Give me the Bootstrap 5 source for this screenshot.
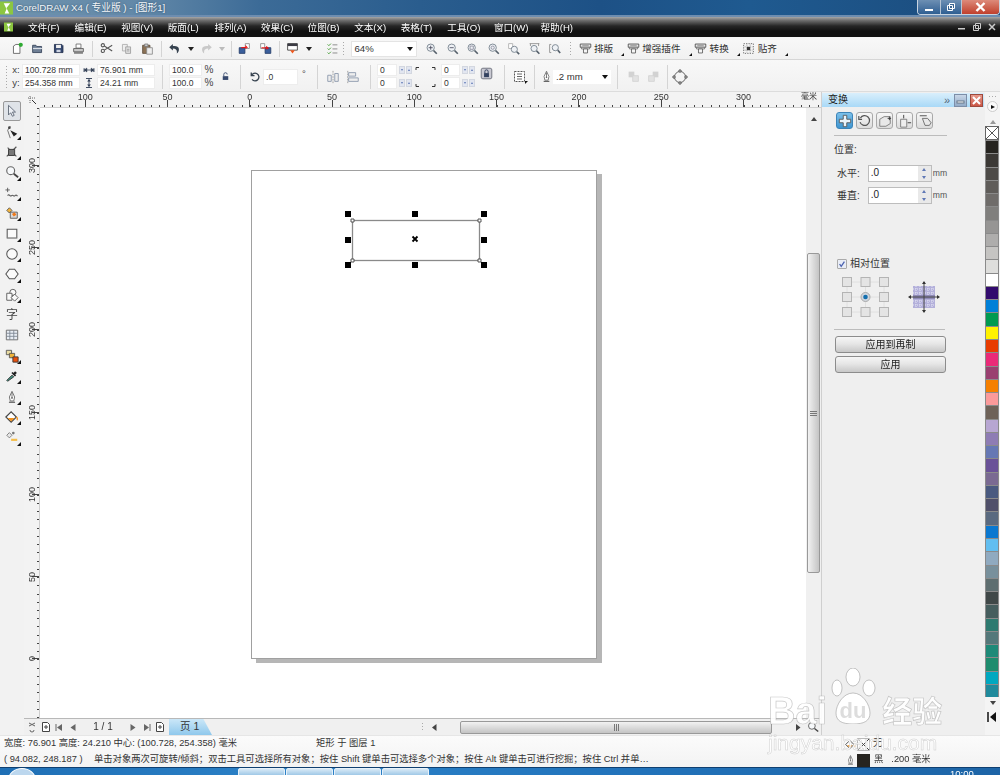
<!DOCTYPE html>
<html lang="zh">
<head>
<meta charset="utf-8">
<title>CorelDRAW X4</title>
<link href="https://cdn.jsdelivr.net/npm/bootstrap@5.3.0/dist/css/bootstrap.min.css" rel="stylesheet">
<style>
html,body{margin:0;height:775px;overflow:hidden;background:#f0f0f0}
body{font-family:"Liberation Sans","Noto Sans CJK SC",sans-serif;font-size:9.6px;line-height:1;color:#333}
.app{width:1000px;height:775px;overflow:hidden;position:relative;filter:blur(.45px)}
.ic{width:16px;height:16px;display:block;flex:none}
.titlebar{height:17px;background:linear-gradient(90deg,#6f93ad 0,#6288a8 14%,#3c6b97 26%,#2a5d8e 42%,#1d5186 60%,#1f5a90 75%,#1b4b7c 100%);border-bottom:2px solid #6d8db0;color:#fff}
.titlebar .name{font-size:9.7px;margin-left:3px;color:#f4f7fa;text-shadow:0 0 2px #2c4a64;white-space:nowrap}
.wbtns{width:83px;height:15px;border:1px solid #c9d4e0;border-top:0;border-radius:0 0 4px 4px;overflow:hidden}
.wbtns>span{display:flex;align-items:center;justify-content:center;height:100%;border-right:1px solid #b5c4d4}
.wmin{width:23px;background:linear-gradient(#6d8fb3,#2f5f92)}
.wmax{width:21px;background:linear-gradient(#6d8fb3,#2f5f92)}
.wcls{flex:1;background:linear-gradient(#dd8a7a,#c0402c);border-right:0!important}
.menubar{height:21px;background:linear-gradient(#a6a6a6 0,#6b6b6b 18%,#262626 45%,#111 70%,#111 100%);border-bottom:1px solid #f6f6f6}
.menubar .nav-link{color:#fff;padding:0;width:46.6px;text-align:center;font-size:9.6px;margin-top:1px;white-space:nowrap}
.mright{color:#ddd;gap:7px;padding-right:4px}
.tb1{height:22px;background:linear-gradient(#f8f8f8,#f1f1f1);border-bottom:1px solid #d6d6d6;padding-left:7px}
.tb2{height:32px;background:linear-gradient(#f8f8f8,#f1f1f1);border-bottom:1px solid #dcdcdc;padding:2px 0 0}
.grip{width:5px;height:16px;background:radial-gradient(circle,#aaa 0 .8px,transparent 1px) 0 0/3px 3px}
.tbn{width:20.5px;height:100%;display:flex;align-items:center;justify-content:center;flex:none}
.tb1 .tbn .ic{width:13px;height:13px}
.tar{width:11px;display:flex;justify-content:center;flex:none}
.tar::before{content:"";border:3px solid transparent;border-top:4px solid #222;border-bottom:0}
.tar.off::before{border-top-color:#bbb}
.vsep{width:7px;height:16px;flex:none;background:linear-gradient(#d4d4d4,#d4d4d4) center/1px 100% no-repeat}
.vsep.lg{height:24px}
.combo{background:#fff;border:1px solid #e4e4e4;height:16px;display:flex;align-items:center;justify-content:space-between;padding:0 3px;flex:none}
.combo::after{content:"";border:3.5px solid transparent;border-top:4px solid #111;border-bottom:0}
.bigbtn{display:flex;align-items:center;flex:none;height:100%}
.bigbtn .tri{width:11px;height:100%;display:flex;align-items:flex-end;justify-content:flex-end;padding:0 0 3px 0}
.bigbtn .tri::before{content:"";border-style:solid;border-width:0 0 3px 3px;border-color:transparent transparent #111 transparent}
.fld{height:12px;background:#fff;border:1px solid #ededed;border-radius:0;padding:0 2px;font-size:8.6px;line-height:10px;color:#333;display:flex;align-items:center;min-height:0;white-space:nowrap}
.st{display:flex;flex-direction:column;gap:1px;flex:none}
.lbl{display:flex;align-items:center;justify-content:center;height:12px;color:#444}
.spin{display:flex;gap:1px;height:12px;align-items:center;padding-left:2px}
.spin i{width:6px;height:8px;background:#e2e6f0;border:1px solid #d3d7e0;display:flex;align-items:center;justify-content:center}
.spin i::before{content:"";border:1.500px solid transparent;border-top:2px solid #5f78b5;border-bottom:0}
.spin i+i::before{border-top:0;border-bottom:2px solid #5f78b5}
.main{height:643px}
.toolbox{width:24px;background:#f2f2f2;flex:none;padding-top:9px}
.tool{height:20.4px;width:24px;display:flex;align-items:center;justify-content:center;position:relative}
.tool .ic{width:14px;height:14px}
.tool.more::after{content:"";position:absolute;right:3px;bottom:2px;border-style:solid;border-width:0 0 4px 4px;border-color:transparent transparent #111 transparent}
.tool.on{width:18px;margin-left:3px;border:1px solid #999;border-radius:2px;background:#dfe3e8}
.rulerrow{height:16px;background:#f3f3f3}
.corner{width:16px;flex:none;display:flex;align-items:center;justify-content:center}
.hruler{background:repeating-linear-gradient(90deg,#444 0 1px,transparent 1px 8.23px) 4px 100%/100% 2px no-repeat;padding-left:4px;overflow:hidden;border-bottom:1px solid #cfcfcf}
.hcell{width:82.3px;flex:none;text-align:center;padding-top:1px;font-size:9px;background:linear-gradient(#444,#444) center bottom/1px 7px no-repeat}
.vruler{width:16px;flex:none;background:#f3f3f3 repeating-linear-gradient(180deg,#444 0 1px,transparent 1px 8.23px) 100% 0/2px 100% no-repeat;padding-top:16px;overflow:hidden;border-right:1px solid #cfcfcf}
.vcell{height:82.3px;display:flex;align-items:center;padding-left:4px;background:linear-gradient(#444,#444) right center/7px 1px no-repeat}
.vcell span{writing-mode:vertical-rl;transform:rotate(180deg);font-size:9px}
.canvas{position:relative;background:#fff;min-width:0}
.sheet{position:absolute;left:211px;top:62px;width:346px;height:489px;background:#fff;border:1px solid #a0a0a0;box-shadow:5px 4px 0 #b6b6b6}
.vscroll{width:15px;flex:none;background:#f0f0f0;padding-top:9px}
.arrow-up{width:0;height:0;border:3px solid transparent;border-bottom:4px solid #444;border-top:0;margin:0 auto}
.vthumb{margin:132px 1px 0 1px;height:320px;background:linear-gradient(90deg,#f2f2f2,#ddd 45%,#c4c4c4);border:1px solid #999;border-radius:2px;display:flex;align-items:center;justify-content:center}
.vthumb::before{content:"";width:7px;height:5px;background:repeating-linear-gradient(#777 0 1px,transparent 1px 2px)}
.botrow{height:17px;background:#f0f0f0;border-top:1px solid #b8b8b8}
.pgctl{width:129px;flex:none;display:flex;align-items:center}
.pgctl svg{flex:none}
.pgno{width:46px;text-align:center;font-size:10px;flex:none}
.pgtab{width:43px;height:16px;background:linear-gradient(#cbe7f8,#8fc8ec);clip-path:polygon(0 0,80% 0,100% 100%,0 100%);font-size:10.5px;padding:2px 0 0 11px;flex:none}
.hthumb{width:312px;height:13px;margin-left:18px;flex:none;background:linear-gradient(#f2f2f2,#ddd 45%,#c4c4c4);border:1px solid #999;border-radius:2px;display:flex;align-items:center;justify-content:center}
.hthumb::before{content:"";width:5px;height:7px;background:repeating-linear-gradient(90deg,#777 0 1px,transparent 1px 2px)}
.docker{width:164px;flex:none;background:#efefef;border-left:1px solid #cfcfcf;padding-top:1px}
.dhead{height:14px;background:linear-gradient(#d9effc,#a9d9f7);padding-left:6px;margin-right:1px;font-size:10px;color:#222}
.dbtn{width:13px;height:13px;border:1px solid #7d8ea8;display:flex;align-items:center;justify-content:center;margin-right:3px;background:linear-gradient(#c9d7e8,#93abc8)}
.dbtn.x{background:linear-gradient(#e79a8c,#cb5646);border-color:#9c4a3e;color:#fff;margin-right:1px}
.dtab{width:17px;height:17px;border:1px solid #a9a9a9;border-radius:3px;background:linear-gradient(#f7f7f7,#dcdcdc);display:flex;align-items:center;justify-content:center;margin-right:3px}
.dtab.on{background:linear-gradient(#7bc0ea,#3f95d0);border-color:#3c84b8}
.dhr{height:1px;background:#bcbcbc;margin-left:12px;margin-right:38px;opacity:1;border:0}
.dl{padding-left:12px;color:#333;font-size:10px}
.drow{padding-left:15px;height:17px;display:flex;align-items:center;font-size:10px}
.dinp{width:64px;height:17px;background:#fff;border:1px solid #bdbdbd;border-radius:0;padding:0 2px;margin-left:8px;display:flex;justify-content:space-between;align-items:flex-start;font-size:10px;line-height:13px;min-height:0;flex:none}
.dsp{width:13px;height:15px;flex:none;display:flex;flex-direction:column;justify-content:space-around;align-items:center;background:#e9e9e9;margin-right:-2px}
.dsp i{display:block;border:2.5px solid transparent;border-bottom:3px solid #5f78b5;border-top:0}
.dsp i+i{border-bottom:0;border-top:3px solid #5f78b5}
.mm{margin-left:1px;font-size:8.6px;color:#555}
.dchk{padding-left:15px;height:11px;display:flex;align-items:center;gap:3px;font-size:10px;margin-top:53px}
.dchk .form-check-input{width:10px;height:10px;margin:0;border-radius:1px;border-color:#aaa;background-color:#e9edf6;flex:none;background-image:url("data:image/svg+xml,%3csvg xmlns='http://www.w3.org/2000/svg' viewBox='0 0 10 10'%3e%3cpath d='M2 5l2 3 4-6' fill='none' stroke='%234a62b0' stroke-width='1.600'/%3e%3c/svg%3e");background-size:100% 100%}
.dbt{display:block;width:111px;height:17px;margin-left:13px;padding:0;border:1px solid #8c8c8c;border-radius:3px;background:linear-gradient(#f6f6f6,#e6e6e6 45%,#c8c8c8);font-size:10px;color:#222;line-height:14px}
.palette{width:15px;flex:none;background:#f4f4f4;padding-top:3px}
.sw{height:13.27px;width:14px;border:1px solid #8a8a8a;border-width:1px 1px 0 1px}
.pdots{width:9px;height:3px;margin:0 auto;background:radial-gradient(circle,#aaa 0 .7px,transparent 1px) 0 0/3px 3px}
.pcirc{width:11px;height:11px;border-radius:50%;margin:3px auto 0;border:1px solid #ccc;background:#fafafa;display:flex;align-items:center;justify-content:center}
.pcirc::before{content:"";border:2.5px solid transparent;border-left:4px solid #111;border-right:0}
.status{height:32px;background:linear-gradient(#fbfbfb,#f3f3f3);border-top:1px solid #e6e6e6;font-size:9.3px;color:#333;padding-left:4px}
.sl{height:16px;display:flex;align-items:center;white-space:nowrap}
.sright{width:155px;flex:none}
.taskbar{height:8px;background:linear-gradient(90deg,#1f6fb5,#2c82c8 30%,#2274bc 60%,#1d64a6);border-top:1px solid #0f3f70;overflow:hidden;color:#fff}
.orb{width:28px;height:24px;border-radius:50%;margin:0 0 0 8px;background:#bcd7ee;border:1px solid #fff;flex:none}
.tk{width:47px;height:10px;background:linear-gradient(#d8e9f6,#8dbde2);border:1px solid #e8f2fa;border-radius:2px 2px 0 0;flex:none;margin-right:1px}
.clock{font-size:9.5px;width:50px;flex:none;line-height:1;padding-top:1px}
.wm{position:absolute;left:768px;top:668px;width:180px;color:#fff;pointer-events:none;z-index:5}
.wm .logo{font:700 38px/1 "Liberation Sans",sans-serif;-webkit-text-stroke:.7px rgba(150,150,150,.55);opacity:.92;margin-bottom:-6px}
.wm .jy{font:700 30px/1 "Noto Sans CJK SC",sans-serif;-webkit-text-stroke:.7px rgba(150,150,150,.55);margin-left:3px;opacity:.92}
.wm .paw{width:52px;height:56px;flex:none;display:block}
.wm .url{font:400 21px/1 "Liberation Sans",sans-serif;-webkit-text-stroke:.5px rgba(150,150,150,.5);margin-top:8px;opacity:.9;white-space:nowrap}
</style>
</head>
<body>
<svg width="0" height="0" class="d-block" style="height:0">
<defs>
<symbol id="new" viewBox="0 0 16 16"><path d="M3 5l3-2h5v11H3z" fill="#fff" stroke="#555"/><circle cx="12" cy="3.5" r="2.6" fill="#2faa33"/></symbol>
<symbol id="open" viewBox="0 0 16 16"><path d="M2 4h4l1 1.5h6V13H2z" fill="#6f7f95" stroke="#2d3b52"/><path d="M2.5 8h11" stroke="#d9dee6" stroke-width="1.5"/></symbol>
<symbol id="save" viewBox="0 0 16 16"><path d="M3 3h9l1.5 1.5V13H3z" fill="#34476f" stroke="#1d2a47"/><path fill="#f0f0f0" d="M5 3.5h6v4H5z"/><path fill="#cfd6e4" d="M5.5 9.5h5v3h-5z"/></symbol>
<symbol id="print" viewBox="0 0 16 16"><path d="M5 2.500h6v5H5z" fill="#fff" stroke="#666"/><path d="M2 8h12v4H2z" fill="#c8c8c8" stroke="#555"/><path d="M2.500 13.500h11" stroke="#555" stroke-width="1.500"/></symbol>
<symbol id="cut" viewBox="0 0 16 16"><g fill="none" stroke="#555" stroke-width="1.300"><circle cx="3.500" cy="4" r="2"/><circle cx="3.500" cy="11" r="2"/><path d="M5.300 5L15 11M5.300 10L15 4"/></g></symbol>
<symbol id="copy" viewBox="0 0 16 16"><path d="M3 3h6v8H3z" fill="#eee" stroke="#aaa"/><path d="M7 6h6v8H7z" fill="#e2e2e2" stroke="#999"/><path d="M8.500 9h3M8.500 11h3" stroke="#999"/></symbol>
<symbol id="paste" viewBox="0 0 16 16"><path d="M2 4h9v10H2z" fill="#8b7256" stroke="#5c4c3a"/><path d="M4.500 2.500h4v3h-4z" fill="#ccc" stroke="#777"/><path d="M7 7h7v8H7z" fill="#eee" stroke="#888"/></symbol>
<symbol id="undo" viewBox="0 0 16 16"><path d="M6 2.500L1.500 6.500 6 10.500V8c3.500 0 5 1.500 5 4.500 0 .8-.1 1.200-.3 1.700 2-1.500 3-3.500 2.700-6C13 5.500 10 4.500 6 5z" fill="#36424f"/></symbol>
<symbol id="redo" viewBox="0 0 16 16"><path d="M10 2.500L14.500 6.500 10 10.500V8c-3.500 0-5 1.500-5 4.500 0 .8.1 1.200.3 1.700-2-1.500-3-3.500-2.700-6C3 5.500 6 4.500 10 5z" fill="#c9c9c9"/></symbol>
<symbol id="imp" viewBox="0 0 16 16"><path d="M1.500 7h7v7h-7z" fill="#3a5f9c" stroke="#223a66"/><path d="M9 2h5v6H9z" fill="#fff" stroke="#888"/><path d="M4 7l7-.5-2-2M11 6.500l-2 1.500" stroke="#e11" stroke-width="1.300" fill="none"/></symbol>
<symbol id="exp" viewBox="0 0 16 16"><path d="M7.500 7h7v7h-7z" fill="#3a5f9c" stroke="#223a66"/><path d="M2 2h5v6H2z" fill="#fff" stroke="#888"/><path d="M3 7l8 .5-2-2M11 7.500l-2 1.500" stroke="#e11" stroke-width="1.300" fill="none"/></symbol>
<symbol id="pub" viewBox="0 0 16 16"><path d="M2 2h12v8H2z" fill="#fff" stroke="#333"/><path d="M2 2h12v3H2z" fill="#3b3b44"/><path d="M5 10h6l-3 4z" fill="#f1591e"/></symbol>
<symbol id="chk" viewBox="0 0 16 16"><path d="M2 3l1.500 1.500L6 2M2 8l1.500 1.500L6 7M2 13l1.500 1.500L6 12" fill="none" stroke="#4b9f3b" stroke-width="1.200"/><path d="M8 3.500h6M8 8.500h6M8 13.500h6" stroke="#777"/></symbol>
<symbol id="zp" viewBox="0 0 16 16"><circle cx="7" cy="7" r="4.500" fill="#eef1f5" stroke="#7f8b95" stroke-width="1.200"/><path d="M10.500 10.500l4 4" stroke="#55606b" stroke-width="2"/><path d="M4.500 7h5M7 4.500v5" stroke="#445"/></symbol>
<symbol id="zm" viewBox="0 0 16 16"><circle cx="7" cy="7" r="4.500" fill="#eef1f5" stroke="#7f8b95" stroke-width="1.200"/><path d="M10.500 10.500l4 4" stroke="#55606b" stroke-width="2"/><path d="M4.500 7h5" stroke="#445"/></symbol>
<symbol id="zs" viewBox="0 0 16 16"><circle cx="7" cy="7" r="4.500" fill="#eef1f5" stroke="#7f8b95" stroke-width="1.200"/><path d="M10.500 10.500l4 4" stroke="#55606b" stroke-width="2"/><path d="M5 5h4v4H5z" fill="none" stroke="#889"/></symbol>
<symbol id="za" viewBox="0 0 16 16"><circle cx="7" cy="7" r="4.500" fill="#eef1f5" stroke="#7f8b95" stroke-width="1.200"/><path d="M10.500 10.500l4 4" stroke="#55606b" stroke-width="2"/><circle cx="7" cy="7" r="2" fill="none" stroke="#889"/></symbol>
<symbol id="zd" viewBox="0 0 16 16"><path d="M2 2h5v6H2z" fill="#fff" stroke="#aaa"/><circle cx="9" cy="9" r="3.800" fill="#eef1f5" stroke="#7f8b95" stroke-width="1.200"/><path d="M12 12l3 3" stroke="#55606b" stroke-width="2"/></symbol>
<symbol id="zw" viewBox="0 0 16 16"><path d="M2 2h12M3 2v3M13 2v3" stroke="#888" fill="none"/><circle cx="7.500" cy="8" r="3.800" fill="#eef1f5" stroke="#7f8b95" stroke-width="1.200"/><path d="M10.500 11l3.500 3.500" stroke="#55606b" stroke-width="2"/></symbol>
<symbol id="zh" viewBox="0 0 16 16"><path d="M2 3v10M2 3h2M2 13h2" stroke="#888" fill="none"/><circle cx="9" cy="7" r="3.800" fill="#eef1f5" stroke="#7f8b95" stroke-width="1.200"/><path d="M12 10l3 3.500" stroke="#55606b" stroke-width="2"/></symbol>
<symbol id="cmd" viewBox="0 0 16 16"><path d="M1.500 2.500h13v4h-13z" fill="#e8e8e8" stroke="#444"/><path d="M3 6.500h10v2H3z" fill="#fff" stroke="#666"/><path d="M5.500 8.500h5v5h-5z" fill="#f5f5f5" stroke="#555"/><path d="M4 4.500h8" stroke="#888"/></symbol>
<symbol id="snap" viewBox="0 0 16 16"><path d="M2 2h12v12H2z" fill="none" stroke="#555" stroke-dasharray="1.500 1.500"/><path d="M6 2v12M10 2v12M2 6h12M2 10h12" stroke="#999" stroke-dasharray="1 1"/><path d="M6 6h4v4H6z" fill="#333"/></symbol>
<symbol id="w" viewBox="0 0 16 16"><path d="M1.500 5.500v5M14.500 5.500v5" stroke="#2d3b52" stroke-width="1.400"/><path d="M2 8h12M2 8l3-2.500v5zM14 8l-3-2.500v5z" stroke="#2d3b52" fill="#2d3b52"/></symbol>
<symbol id="h" viewBox="0 0 16 16"><path d="M4 2h8M4 14h8M8 3v10" stroke="#2d3b52" stroke-width="1.200" fill="none"/><path d="M8 3L5.500 6h5zM8 13l-2.500-3h5z" fill="#2d3b52"/></symbol>
<symbol id="lk" viewBox="0 0 16 16"><path d="M4 7.500h8V13H4z" fill="#37496e"/><path d="M5.500 7.500V5a2.500 2.500 0 015 0" fill="none" stroke="#37496e" stroke-width="1.300"/></symbol>
<symbol id="rot" viewBox="0 0 16 16"><path d="M4 3v4h4M4.300 7a4.700 4.700 0 11.700 4.500" fill="none" stroke="#36424f" stroke-width="1.600"/></symbol>
<symbol id="al1" viewBox="0 0 16 16"><path d="M8 1v14" stroke="#999" stroke-dasharray="2 1"/><path d="M2 6h4v7H2zM10 4h4v9h-4z" fill="#eee" stroke="#8a97ab"/></symbol>
<symbol id="al2" viewBox="0 0 16 16"><path d="M2 1v14" stroke="#999" stroke-dasharray="2 1"/><path d="M3 3h8v4H3zM3 9h11v4H3z" fill="#eee" stroke="#8a97ab"/></symbol>
<symbol id="clk" viewBox="0 0 16 16"><rect x="1.500" y="1.500" width="13" height="13" rx="2" fill="#c9c9d2" stroke="#5f6270"/><path d="M5 7.500h6v5H5z" fill="#33415f"/><path d="M6 7.500V5.500a2 2 0 014 0v2" fill="none" stroke="#33415f" stroke-width="1.200"/></symbol>
<symbol id="wrap" viewBox="0 0 16 16"><path d="M2.500 2.500h10v10h-10z" fill="#fff" stroke="#555" stroke-dasharray="2 1"/><path d="M5 5h5M5 7.500h5M5 10h5" stroke="#666"/><path d="M13 12l3 0-3 3z" fill="#111"/></symbol>
<symbol id="pen" viewBox="0 0 16 16"><path d="M8 1.500L5 8l1 4.500h4L11 8z" fill="#fff" stroke="#666"/><path d="M8 3v6" stroke="#666"/><circle cx="8" cy="9" r="1" fill="#666"/><path d="M4.500 14h7" stroke="#666" stroke-width="1.500"/></symbol>
<symbol id="ob1" viewBox="0 0 16 16"><path d="M2 2h7v7H2z" fill="#d2d2d2"/><path d="M7 7h7v7H7z" fill="#e2e2e2" stroke="#d2d2d2"/></symbol>
<symbol id="ob2" viewBox="0 0 16 16"><path d="M7 2h7v7H7z" fill="#d2d2d2"/><path d="M2 7h7v7H2z" fill="#e2e2e2" stroke="#d2d2d2"/></symbol>
<symbol id="conv" viewBox="0 0 16 16"><circle cx="8" cy="8" r="5.500" fill="none" stroke="#666"/><path d="M7 1h2v2H7zM7 13h2v2H7zM1 7h2v2H1zM13 7h2v2h-2z" fill="#fff" stroke="#555"/></symbol>
<symbol id="t1" viewBox="0 0 16 16"><path d="M4 1.500v11l2.500-2.500 2 4 2-1-2-3.800h3.500z" fill="#eceff4" stroke="#5a6472"/></symbol>
<symbol id="t2" viewBox="0 0 16 16"><path d="M6 1.500L3 6l3 9" fill="none" stroke="#666"/><circle cx="5" cy="3" r="1.500" fill="#444"/><path d="M6 6l8 4-4 3z" fill="#222"/></symbol>
<symbol id="t3" viewBox="0 0 16 16"><path d="M3 3l10 10M13 2L2 13" stroke="#555" stroke-width="1.300"/><path d="M4 5h7v7H4z" fill="#777" stroke="#333"/></symbol>
<symbol id="t4" viewBox="0 0 16 16"><circle cx="6.500" cy="6.500" r="4.500" fill="#f7f9fb" stroke="#666" stroke-width="1.300"/><path d="M10 10l5 4" stroke="#444" stroke-width="2"/></symbol>
<symbol id="t5" viewBox="0 0 16 16"><path d="M3 2v5M.5 4.500h5" stroke="#555"/><path d="M3 11c2-3 2.500 2 4.500 0s2 2 4 0 1.500 1 3 0" stroke="#555" fill="none" stroke-width="1.200"/></symbol>
<symbol id="t6" viewBox="0 0 16 16"><path d="M2 5l3-3 3 3-3 3z" fill="#f3b43d" stroke="#555"/><path d="M6 7h8v7H6z" fill="#d9d9d9" stroke="#555"/><path d="M8 9l3-2 2 3-3 2z" fill="#ee7a1c"/></symbol>
<symbol id="t7" viewBox="0 0 16 16"><path d="M2.500 2.500h11v10h-11z" fill="#fafafa" stroke="#555" stroke-width="1.200"/><path d="M3 11.500h10v1H3z" fill="#aaa"/></symbol>
<symbol id="t8" viewBox="0 0 16 16"><circle cx="8" cy="8" r="6" fill="#fafafa" stroke="#555" stroke-width="1.200"/></symbol>
<symbol id="t9" viewBox="0 0 16 16"><path d="M5 2.500h6L15 8l-4 5.500H5L1 8z" fill="#fafafa" stroke="#555" stroke-width="1.200"/></symbol>
<symbol id="t10" viewBox="0 0 16 16"><circle cx="9" cy="5" r="3.500" fill="#fafafa" stroke="#555"/><path d="M2 6h6v8H2z" fill="#fafafa" stroke="#555"/><path d="M11 7l4 4-4 4-4-4z" fill="#fafafa" stroke="#555"/></symbol>
<symbol id="t12" viewBox="0 0 16 16"><path d="M1.500 2.500h13v11h-13z" fill="#e8edf4" stroke="#666"/><path d="M1.500 6h13M1.500 9.500h13M5.500 2.500v11M10 2.500v11" stroke="#7e8794"/></symbol>
<symbol id="t13" viewBox="0 0 16 16"><path d="M1.500 1.500h6v5h-6z" fill="#e9dca2" stroke="#555"/><path d="M5 5h6v5H5z" fill="#efb33a" stroke="#555"/><path d="M9 9h6v6H9z" fill="#e8500c" stroke="#333"/></symbol>
<symbol id="t14" viewBox="0 0 16 16"><path d="M3 14l-1-1 6-6 2 2z" fill="#3e8d7d" stroke="#333"/><path d="M9 5l2-2c1-1 3 1 2 2l-2 2z" fill="#222"/><path d="M8 4l4 4" stroke="#222" stroke-width="2"/></symbol>
<symbol id="t16" viewBox="0 0 16 16"><path d="M1 8l6-6 6 6-6 6z" fill="#fff" stroke="#444" stroke-width="1.300"/><path d="M3 9h8l-4 4z" fill="#f0901c"/><path d="M13 8c1.500 1.500 1.500 3 .5 3.500" stroke="#f0901c" fill="none" stroke-width="1.500"/></symbol>
<symbol id="t17" viewBox="0 0 16 16"><path d="M2 6l3-3 3 3-3 3z" fill="#e8e8e8" stroke="#777"/><path d="M7 10h7v2.500H7z" fill="#f4bd4a"/><circle cx="9.500" cy="3.500" r="1.500" fill="#777"/></symbol>
<symbol id="d1" viewBox="0 0 16 16"><path d="M6 1.500h4v4.500h4.500v4H10v4.500H6V10H1.500V6H6z" fill="#eaf4fb" stroke="#555"/></symbol>
<symbol id="d2" viewBox="0 0 16 16"><path d="M3 5a6 6 0 11-.5 5" fill="none" stroke="#555" stroke-width="1.500"/><path d="M1 2.500v4h4" fill="none" stroke="#555" stroke-width="1.500"/></symbol>
<symbol id="d3" viewBox="0 0 16 16"><path d="M2 6l5-3h7v8l-5 3H2z" fill="#e8e8e8" stroke="#777"/><path d="M11 5h4M13 3v4" stroke="#333"/></symbol>
<symbol id="d4" viewBox="0 0 16 16"><path d="M3 6h7v9H3z" fill="#eee" stroke="#777"/><path d="M6.500 1v4" stroke="#333"/><path d="M11 10h4" stroke="#333"/></symbol>
<symbol id="d5" viewBox="0 0 16 16"><path d="M5 5h6l4 5-2 3H8z" fill="#e8e8e8" stroke="#666"/><path d="M2 2h8" stroke="#444"/></symbol>
<symbol id="logo" viewBox="0 0 14 14"><path fill="#8cc640" d="M0 0h14v14H0z"/><path d="M4 2h7L7 7l3 6H5l2-5z" fill="#fff"/></symbol>
<symbol id="pgadd" viewBox="0 0 12 12"><path d="M2.500 1.500h5l2 2v7h-7z" fill="#fff" stroke="#444"/><path d="M4 6h4M6 4v4" stroke="#444"/></symbol>
</defs>
</svg>

<div class="app d-flex flex-column">

  <div class="titlebar d-flex align-items-start justify-content-between flex-none">
    <div class="d-flex align-items-center" style="height:15px"><svg class="ic" style="width:13px;height:14px"><use href="#logo"/></svg><span class="name">CorelDRAW X4 ( 专业版 ) - [图形1]</span></div>
    <div class="wbtns d-flex">
      <span class="wmin"><svg width="10" height="9"><rect x="1" y="6" width="8" height="2" fill="#fff"/></svg></span>
      <span class="wmax"><svg width="10" height="10"><path d="M3.500 1.500h5v5h-5zM1.500 3.500h5v5h-5z" fill="#3a6592" stroke="#fff"/></svg></span>
      <span class="wcls"><svg width="11" height="10"><path d="M1.500 1L9.500 9M9.500 1L1.500 9" stroke="#fff" stroke-width="2.400"/></svg></span>
    </div>
  </div>

  <nav class="navbar navbar-expand menubar p-0 align-items-center flex-nowrap justify-content-between">
    <div class="d-flex align-items-center">
      <svg class="ic ms-1 me-2" style="width:9px;height:12px"><use href="#logo"/></svg>
      <ul class="navbar-nav flex-row" style="margin-left:-1px">
        <li class="nav-item"><a class="nav-link" href="#">文件(F)</a></li>
        <li class="nav-item"><a class="nav-link" href="#">编辑(E)</a></li>
        <li class="nav-item"><a class="nav-link" href="#">视图(V)</a></li>
        <li class="nav-item"><a class="nav-link" href="#">版面(L)</a></li>
        <li class="nav-item"><a class="nav-link" href="#">排列(A)</a></li>
        <li class="nav-item"><a class="nav-link" href="#">效果(C)</a></li>
        <li class="nav-item"><a class="nav-link" href="#">位图(B)</a></li>
        <li class="nav-item"><a class="nav-link" href="#">文本(X)</a></li>
        <li class="nav-item"><a class="nav-link" href="#">表格(T)</a></li>
        <li class="nav-item"><a class="nav-link" href="#">工具(O)</a></li>
        <li class="nav-item"><a class="nav-link" href="#">窗口(W)</a></li>
        <li class="nav-item"><a class="nav-link" href="#">帮助(H)</a></li>
      </ul>
    </div>
    <div class="d-flex align-items-center mright">
      <svg width="8" height="8"><rect y="5" width="7" height="1.500" fill="#ccc"/></svg>
      <svg width="8" height="8"><path d="M2.500.5h5v5h-5zM.5 2.500h5v5h-5z" fill="#222" stroke="#ccc"/></svg>
      <svg width="8" height="8"><path d="M1 1l6 6M7 1L1 7" stroke="#ccc" stroke-width="1.500"/></svg>
    </div>
  </nav>

  <div class="tb1 d-flex align-items-center">
    <div class="tbn"><svg class="ic"><use href="#new"/></svg></div>
    <div class="tbn"><svg class="ic"><use href="#open"/></svg></div>
    <div class="tbn"><svg class="ic"><use href="#save"/></svg></div>
    <div class="tbn"><svg class="ic"><use href="#print"/></svg></div>
    <div class="vsep"></div>
    <div class="tbn"><svg class="ic"><use href="#cut"/></svg></div>
    <div class="tbn"><svg class="ic"><use href="#copy"/></svg></div>
    <div class="tbn"><svg class="ic"><use href="#paste"/></svg></div>
    <div class="vsep"></div>
    <div class="tbn"><svg class="ic"><use href="#undo"/></svg></div><div class="tar"></div>
    <div class="tbn"><svg class="ic"><use href="#redo"/></svg></div><div class="tar off"></div>
    <div class="vsep"></div>
    <div class="tbn"><svg class="ic"><use href="#imp"/></svg></div>
    <div class="tbn"><svg class="ic"><use href="#exp"/></svg></div>
    <div class="vsep"></div>
    <div class="tbn"><svg class="ic"><use href="#pub"/></svg></div><div class="tar"></div>
    <div class="tbn ms-2"><svg class="ic"><use href="#chk"/></svg></div>
    <div class="grip" style="width:3px;margin:0 3px 0 -1px"></div>
    <div class="combo" style="width:66px;margin-left:3px;margin-right:5px">64%</div>
    <div class="tbn"><svg class="ic"><use href="#zp"/></svg></div>
    <div class="tbn"><svg class="ic"><use href="#zm"/></svg></div>
    <div class="tbn"><svg class="ic"><use href="#zs"/></svg></div>
    <div class="tbn"><svg class="ic"><use href="#za"/></svg></div>
    <div class="tbn"><svg class="ic"><use href="#zd"/></svg></div>
    <div class="tbn"><svg class="ic"><use href="#zw"/></svg></div>
    <div class="tbn"><svg class="ic"><use href="#zh"/></svg></div>
    <div class="grip" style="width:3px;margin:0 4px 0 4px"></div>
    <div class="bigbtn"><div class="tbn" style="width:18px"><svg class="ic"><use href="#cmd"/></svg></div><span>排版</span><span class="tri"></span></div>
    <div class="bigbtn"><div class="tbn" style="width:18px"><svg class="ic"><use href="#cmd"/></svg></div><span>增强插件</span><span class="tri"></span></div>
    <div class="bigbtn"><div class="tbn" style="width:18px"><svg class="ic"><use href="#cmd"/></svg></div><span>转换</span><span class="tri"></span></div>
    <div class="bigbtn"><div class="tbn" style="width:18px"><svg class="ic"><use href="#snap"/></svg></div><span>贴齐</span><span class="tri"></span></div>
  </div>

  <div class="tb2 d-flex align-items-center">
    <div class="grip" style="width:3px;height:24px;margin:0 2px 0 5px"></div>
    <div class="st" style="width:12px"><div class="lbl">x:</div><div class="lbl">y:</div></div>
    <div class="st" style="width:58px"><div class="form-control fld">100.728 mm</div><div class="form-control fld">254.358 mm</div></div>
    <div class="st" style="width:17px"><div class="lbl"><svg class="ic" style="width:12px;height:12px"><use href="#w"/></svg></div><div class="lbl"><svg class="ic" style="width:12px;height:12px"><use href="#h"/></svg></div></div>
    <div class="st" style="width:58px"><div class="form-control fld">76.901 mm</div><div class="form-control fld">24.21 mm</div></div>
    <div class="vsep lg" style="width:14px"></div>
    <div class="st" style="width:33px"><div class="form-control fld">100.0</div><div class="form-control fld">100.0</div></div>
    <div class="st" style="width:14px"><div class="lbl" style="font-size:10px">%</div><div class="lbl" style="font-size:10px">%</div></div>
    <div class="tbn" style="width:18px"><svg class="ic" style="width:11px;height:11px"><use href="#lk"/></svg></div>
    <div class="vsep lg" style="width:12px"></div>
    <div class="tbn" style="width:17px"><svg class="ic" style="width:13px;height:13px"><use href="#rot"/></svg></div>
    <div class="form-control fld" style="width:35px;height:16px;flex:none">.0</div>
    <div class="lbl" style="width:12px;margin-bottom:5px">°</div>
    <div class="vsep lg" style="width:14px"></div>
    <div class="tbn" style="width:18px"><svg class="ic" style="width:14px;height:14px"><use href="#al1"/></svg></div>
    <div class="tbn" style="width:21px"><svg class="ic" style="width:14px;height:14px"><use href="#al2"/></svg></div>
    <div class="vsep lg" style="width:14px"></div>
    <div class="st"><div class="d-flex"><div class="form-control fld" style="width:20px">0</div><div class="spin"><i></i><i></i></div></div><div class="d-flex"><div class="form-control fld" style="width:20px">0</div><div class="spin"><i></i><i></i></div></div></div>
    <svg width="26" height="26" class="flex-none"><path d="M7 3.500H4V6M7 22.500H4V20M20 3.500h3V6M20 22.500h3V20" fill="none" stroke="#333"/></svg>
    <div class="st" style="margin-left:3px"><div class="d-flex"><div class="form-control fld" style="width:19px">0</div><div class="spin"><i></i><i></i></div></div><div class="d-flex"><div class="form-control fld" style="width:19px">0</div><div class="spin"><i></i><i></i></div></div></div>
    <div class="tbn" style="width:22px;margin-top:-6px"><svg class="ic" style="width:13px;height:13px"><use href="#clk"/></svg></div>
    <div class="vsep lg" style="width:14px"></div>
    <div class="tbn" style="width:18px"><svg class="ic"><use href="#wrap"/></svg></div>
    <div class="vsep lg" style="width:10px"></div>
    <div class="tbn" style="width:14px"><svg class="ic" style="width:13px;height:13px"><use href="#pen"/></svg></div>
    <div class="combo" style="width:58px;height:14px;border:0">.2 mm</div>
    <div class="vsep lg" style="width:12px"></div>
    <div class="tbn"><svg class="ic" style="width:13px;height:13px"><use href="#ob1"/></svg></div>
    <div class="tbn"><svg class="ic" style="width:13px;height:13px"><use href="#ob2"/></svg></div>
    <div class="vsep lg" style="width:6px"></div>
    <div class="tbn"><svg class="ic"><use href="#conv"/></svg></div>
  </div>

  <div class="main d-flex">
    <div class="toolbox">
      <div class="tool on"><svg class="ic"><use href="#t1"/></svg></div>
      <div class="tool more"><svg class="ic"><use href="#t2"/></svg></div>
      <div class="tool more"><svg class="ic"><use href="#t3"/></svg></div>
      <div class="tool more"><svg class="ic"><use href="#t4"/></svg></div>
      <div class="tool more"><svg class="ic"><use href="#t5"/></svg></div>
      <div class="tool more"><svg class="ic"><use href="#t6"/></svg></div>
      <div class="tool more"><svg class="ic"><use href="#t7"/></svg></div>
      <div class="tool more"><svg class="ic"><use href="#t8"/></svg></div>
      <div class="tool more"><svg class="ic"><use href="#t9"/></svg></div>
      <div class="tool more"><svg class="ic"><use href="#t10"/></svg></div>
      <div class="tool" style="font-size:12px;color:#444">字</div>
      <div class="tool"><svg class="ic"><use href="#t12"/></svg></div>
      <div class="tool more"><svg class="ic"><use href="#t13"/></svg></div>
      <div class="tool more"><svg class="ic"><use href="#t14"/></svg></div>
      <div class="tool more"><svg class="ic"><use href="#pen"/></svg></div>
      <div class="tool more"><svg class="ic"><use href="#t16"/></svg></div>
      <div class="tool more"><svg class="ic"><use href="#t17"/></svg></div>
    </div>

    <div class="flex-grow-1 d-flex flex-column" style="min-width:0">
      <div class="rulerrow d-flex">
        <div class="corner"><svg width="11" height="11"><path d="M1 3h8M3 1v8" stroke="#666" stroke-dasharray="1 1"/><path d="M5 5l4 4" stroke="#333"/></svg></div>
        <div class="hruler flex-grow-1 d-flex">
          <div class="hcell">100</div><div class="hcell">50</div><div class="hcell">0</div><div class="hcell">50</div><div class="hcell">100</div><div class="hcell">150</div><div class="hcell">200</div><div class="hcell">250</div><div class="hcell">300</div>
          <div class="flex-grow-1 text-end pe-1" style="font-size:8px;padding-top:1px">毫米</div>
        </div>
      </div>
      <div class="d-flex flex-grow-1" style="min-height:0">
        <div class="vruler">
          <div class="vcell"><span>300</span></div><div class="vcell"><span>250</span></div><div class="vcell"><span>200</span></div><div class="vcell"><span>150</span></div><div class="vcell"><span>100</span></div><div class="vcell"><span>50</span></div><div class="vcell"><span>0</span></div>
        </div>
        <div class="canvas flex-grow-1">
          <div class="sheet">
            <svg width="344" height="487" class="d-block">
              <rect x="100.500" y="49.500" width="127" height="40" fill="none" stroke="#8a8a8a" stroke-width="1.300"/>
              <path fill="#fff" stroke="#555" d="M99 48h3v3h-3zM226 48h3v3h-3zM99 88h3v3h-3zM226 88h3v3h-3z"/>
              <path fill="#000" d="M93 40h6v6h-6zM160 40h6v6h-6zM229 40h6v6h-6zM93 66h6v6h-6zM229 66h6v6h-6zM93 91h6v6h-6zM160 91h6v6h-6zM229 91h6v6h-6z"/>
              <path d="M160.500 65.500l5 5M165.500 65.500l-5 5" stroke="#000" stroke-width="1.800"/>
            </svg>
          </div>
        </div>
        <div class="vscroll"><div class="arrow-up"></div><div class="vthumb"></div></div>
      </div>
      <div class="botrow d-flex align-items-center">
        <div class="corner"><svg width="9" height="13"><path d="M1 2l6 3M7 2L1 5M2 9a2 2 0 104 0" stroke="#666" fill="none"/></svg></div>
        <div class="pgctl">
          <svg class="ic" style="width:12px;height:12px"><use href="#pgadd"/></svg>
          <svg width="14" height="9"><path d="M4 1v7" stroke="#666"/><path d="M10 1L5 4.500 10 8z" fill="#666"/></svg>
          <svg width="14" height="9"><path d="M9.500 1L4.500 4.500 9.500 8z" fill="#666"/></svg>
          <span class="pgno">1 / 1</span>
          <svg width="14" height="9"><path d="M4.500 1L9.500 4.500 4.500 8z" fill="#666"/></svg>
          <svg width="14" height="9"><path d="M4 1L9 4.500 4 8z" fill="#666"/><path d="M10 1v7" stroke="#666"/></svg>
          <svg class="ic" style="width:12px;height:12px"><use href="#pgadd"/></svg>
        </div>
        <div class="pgtab">页 1</div>
        <div class="flex-grow-1 d-flex justify-content-end"><div class="grip" style="width:3px;height:10px;margin-right:3px"></div></div>
        <svg width="15" height="9" class="flex-none"><path d="M9.500 1L5 4.500 9.500 8z" fill="#444"/></svg>
        <div class="hthumb"></div>
        <div style="width:19px" class="flex-none"></div>
        <svg width="14" height="9" class="flex-none"><path d="M5 1L9.500 4.500 5 8z" fill="#444"/></svg>
        <svg class="ic flex-none" style="width:12px;height:12px;margin:0 2px"><use href="#t4"/></svg>
      </div>
    </div>

    <aside class="docker d-flex flex-column">
      <div class="dhead d-flex align-items-center">
        <span class="flex-grow-1">变换</span>
        <span class="me-1" style="font-size:11px;color:#567">»</span>
        <span class="dbtn"><svg width="9" height="9"><rect y="5" x="1" width="7" height="2" fill="#fff" stroke="#678"/></svg></span>
        <span class="dbtn x"><svg width="9" height="9"><path d="M1 1l7 7M8 1L1 8" stroke="#fff" stroke-width="2"/></svg></span>
      </div>
      <div class="d-flex" style="padding-left:14px;margin-top:5px">
        <span class="dtab on"><svg class="ic" style="width:14px;height:14px"><use href="#d1"/></svg></span>
        <span class="dtab"><svg class="ic" style="width:13px;height:13px"><use href="#d2"/></svg></span>
        <span class="dtab"><svg class="ic" style="width:14px;height:14px"><use href="#d3"/></svg></span>
        <span class="dtab"><svg class="ic" style="width:14px;height:14px"><use href="#d4"/></svg></span>
        <span class="dtab"><svg class="ic" style="width:14px;height:14px"><use href="#d5"/></svg></span>
      </div>
      <hr class="dhr" style="margin-top:6px;margin-bottom:0">
      <div class="dl" style="margin-top:9px;height:12px">位置:</div>
      <div class="drow" style="margin-top:8px">水平: <div class="form-control dinp">.0<span class="dsp"><i></i><i></i></span></div><span class="mm">mm</span></div>
      <div class="drow" style="margin-top:5px">垂直: <div class="form-control dinp">.0<span class="dsp"><i></i><i></i></span></div><span class="mm">mm</span></div>
      <label class="dchk" style="margin-top:54px"><input class="form-check-input" type="checkbox" checked><span>相对位置</span></label>
      <div class="d-flex align-items-center" style="padding-left:19px;margin-top:5px;height:46px">
        <svg width="50" height="46" class="flex-none">
          <path d="M6 8h37M6 23h37M6 38h37M6 8v30M24.500 8v30M43 8v30" stroke="#e0e0e0"/>
          <g fill="#e4e4e4" stroke="#b4b4b4"><rect x="1.500" y="3.500" width="9" height="9"/><rect x="20" y="3.500" width="9" height="9"/><rect x="38.500" y="3.500" width="9" height="9"/><rect x="1.500" y="18.500" width="9" height="9"/><rect x="38.500" y="18.500" width="9" height="9"/><rect x="1.500" y="33.500" width="9" height="9"/><rect x="20" y="33.500" width="9" height="9"/><rect x="38.500" y="33.500" width="9" height="9"/></g>
          <circle cx="24.500" cy="23" r="4.500" fill="#d0d6de" stroke="#aaa"/><circle cx="24.500" cy="23" r="2.300" fill="#136fae"/>
        </svg>
        <svg width="32" height="32" class="flex-none" style="margin-left:17px">
          <rect x="5" y="5" width="22" height="22" fill="#b3b0da"/>
          <path d="M8 5v22M12 5v22M20 5v22M24 5v22M5 8h22M5 12h22M5 20h22M5 24h22" stroke="#e4e4f4" stroke-dasharray="1 1"/>
          <rect x="5" y="14" width="22" height="4" fill="#8f8bb8"/>
          <path d="M16 1v30M2 16h28" stroke="#444"/><path d="M16 0l-2 3h4zM16 32l-2-3h4zM0 16l3-2v4zM32 16l-3-2v4z" fill="#333"/>
        </svg>
      </div>
      <hr class="dhr" style="margin-top:9px;margin-bottom:0;margin-right:40px">
      <button class="btn dbt" type="button" style="margin-top:6px">应用到再制</button>
      <button class="btn dbt" type="button" style="margin-top:3px">应用</button>
    </aside>

    <div class="palette d-flex flex-column">
      <div class="pdots"></div>
      <div class="pcirc"></div>
      <div class="arrow-up" style="margin-top:8px;border-bottom-color:#999"></div>
      <svg width="14" height="14" class="d-block" style="margin-top:2px"><rect x=".5" y=".5" width="13" height="13" fill="#fff" stroke="#666"/><path d="M1 1l12 12M13 1L1 13" stroke="#555"/></svg>
      <div class="sw" style="background:#262420"></div><div class="sw" style="background:#3b3835"></div><div class="sw" style="background:#4d4a47"></div><div class="sw" style="background:#5f5c59"></div><div class="sw" style="background:#6f6c6a"></div><div class="sw" style="background:#807f7d"></div><div class="sw" style="background:#969594"></div><div class="sw" style="background:#aeadac"></div><div class="sw" style="background:#c5c4c2"></div><div class="sw" style="background:#dededc"></div><div class="sw" style="background:#ffffff"></div><div class="sw" style="background:#320b6e"></div><div class="sw" style="background:#0080d8"></div><div class="sw" style="background:#009a50"></div><div class="sw" style="background:#fff200"></div><div class="sw" style="background:#e83c00"></div><div class="sw" style="background:#ea2a78"></div><div class="sw" style="background:#9a4070"></div><div class="sw" style="background:#f58000"></div><div class="sw" style="background:#fb9a9a"></div><div class="sw" style="background:#6e6258"></div><div class="sw" style="background:#b7a6d2"></div><div class="sw" style="background:#8e7cb4"></div><div class="sw" style="background:#6678b4"></div><div class="sw" style="background:#6a5298"></div><div class="sw" style="background:#7a6a92"></div><div class="sw" style="background:#4a5a80"></div><div class="sw" style="background:#50506a"></div><div class="sw" style="background:#5a6a80"></div><div class="sw" style="background:#0a78d0"></div><div class="sw" style="background:#62bef0"></div><div class="sw" style="background:#90aac0"></div><div class="sw" style="background:#78909c"></div><div class="sw" style="background:#5e6e70"></div><div class="sw" style="background:#404848"></div><div class="sw" style="background:#465e5e"></div><div class="sw" style="background:#2e7a70"></div><div class="sw" style="background:#54787a"></div><div class="sw" style="background:#1e8a78"></div><div class="sw" style="background:#1e8c6e"></div><div class="sw" style="background:#00a8c0"></div><div class="sw" style="background:#208a9c"></div>
      <div class="arrow-up" style="margin-top:4px;transform:rotate(180deg)"></div>
      <svg width="14" height="12" class="d-block" style="margin-top:6px"><path d="M3 1v10" stroke="#111" stroke-width="1.500"/><path d="M11 1L5 6l6 5z" fill="#111"/></svg>
    </div>
  </div>

  <footer class="status d-flex justify-content-between">
    <div class="flex-grow-1">
      <div class="sl"><span style="width:312px" class="flex-none">宽度: 76.901 高度: 24.210 中心: (100.728, 254.358) 毫米</span><span>矩形 于 图层 1</span></div>
      <div class="sl"><span style="width:90px" class="flex-none">( 94.082, 248.187 )</span><span>单击对象两次可旋转/倾斜；双击工具可选择所有对象；按住 Shift 键单击可选择多个对象；按住 Alt 键单击可进行挖掘；按住 Ctrl 并单…</span></div>
    </div>
    <div class="sright">
      <div class="sl"><svg class="ic" style="width:11px;height:11px;margin-right:1px"><use href="#t16"/></svg><svg width="13" height="13" class="flex-none" style="margin-right:3px"><path d="M.5 .5h12v12H.5z" fill="#fff" stroke="#bbb"/><path d="M1 1l11 11M12 1L1 12" stroke="#444"/></svg>无</div>
      <div class="sl"><svg class="ic" style="width:11px;height:12px;margin-right:1px"><use href="#pen"/></svg><span class="flex-none" style="width:13px;height:13px;background:#262420;margin-right:4px"></span>黑<span class="ms-2">.200 毫米</span></div>
    </div>
  </footer>

  <div class="taskbar d-flex">
    <div class="orb"></div>
    <div style="width:202px" class="flex-none"></div>
    <div class="tk"></div><div class="tk"></div><div class="tk"></div><div class="tk"></div>
    <div class="flex-grow-1"></div>
    <div class="clock">10:00</div>
  </div>

  <div class="wm">
    <div class="d-flex align-items-end" style="height:56px">
      <span class="logo">Bai</span>
      <svg class="paw" viewBox="0 0 52 56">
        <g fill="#fff" stroke="rgba(150,150,150,.55)"><ellipse cx="26" cy="9" rx="7" ry="9"/><ellipse cx="10" cy="20" rx="5" ry="8"/><ellipse cx="42" cy="20" rx="6" ry="8"/><path d="M26 25c10 0 17 12 17 20s-6 11-17 11-17-3-17-11 7-20 17-20z"/></g>
        <text x="26" y="50" text-anchor="middle" font-family="Liberation Sans" font-weight="700" font-size="22" fill="#ddd">du</text>
      </svg>
      <span class="jy">经验</span>
    </div>
    <div class="url">jingyan.baidu.com</div>
  </div>
</div>
</body>
</html>
